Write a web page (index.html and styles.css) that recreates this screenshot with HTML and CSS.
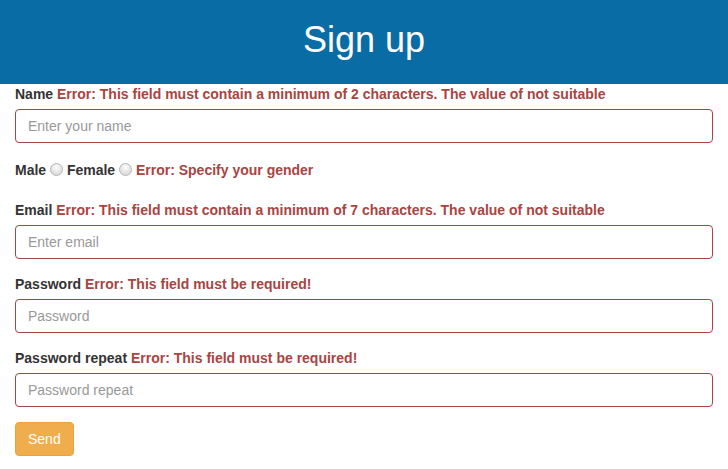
FILE: index.html
```html
<!DOCTYPE html>
<html lang="en">
<head>
<meta charset="utf-8">
<title>Sign up</title>
<link rel="stylesheet" href="styles.css">
</head>
<body>
<header class="header">
  <h1 class="title">Sign up</h1>
</header>
<form class="form">
  <div class="group">
    <label class="label">Name <span class="error">Error: This field must contain a minimum of 2 characters. The value of not suitable</span></label>
    <input class="control" type="text" placeholder="Enter your name">
  </div>
  <div class="group gender">
    <label class="label">Male</label> <input class="radio" type="radio" name="g"> <label class="label">Female</label> <input class="radio" type="radio" name="g"> <span class="error">Error: Specify your gender</span>
  </div>
  <div class="group">
    <label class="label">Email <span class="error">Error: This field must contain a minimum of 7 characters. The value of not suitable</span></label>
    <input class="control" type="text" placeholder="Enter email">
  </div>
  <div class="group">
    <label class="label">Password <span class="error">Error: This field must be required!</span></label>
    <input class="control" type="password" placeholder="Password">
  </div>
  <div class="group">
    <label class="label">Password repeat <span class="error">Error: This field must be required!</span></label>
    <input class="control" type="password" placeholder="Password repeat">
  </div>
  <button class="btn" type="button">Send</button>
</form>
</body>
</html>
```

FILE: styles.css
```css
* { box-sizing: border-box; }
html, body { margin: 0; padding: 0; }
body {
  font-family: "Liberation Sans", Arial, Helvetica, sans-serif;
  font-size: 14px;
  line-height: 20px;
  color: #333;
  background: #fff;
}
.header {
  background: #0a6ca4;
  height: 84px;
  padding-top: 20px;
  text-align: center;
}
.title {
  margin: 0;
  font-size: 36px;
  font-weight: 500;
  line-height: 39.6px;
  color: #fff;
}
.form {
  padding: 0 15px;
}
.group {
  margin-bottom: 15px;
}
.label {
  display: inline-block;
  font-weight: bold;
  margin-bottom: 5px;
  color: #333;
}
.error {
  color: #a94442;
  font-weight: bold;
}
.control {
  display: block;
  width: 100%;
  height: 34px;
  padding: 6px 12px;
  font-family: inherit;
  font-size: 14px;
  line-height: 20px;
  color: #555;
  background: #fff;
  border: 1px solid #a94442;
  border-radius: 4px;
  outline: none;
}
.control::placeholder { color: #999; opacity: 1; }
.gender {
  height: 27px;
  padding-top: 2px;
}
.gender .label { margin-bottom: 0; }
.radio {
  -webkit-appearance: none;
  appearance: none;
  width: 13px;
  height: 13px;
  margin: 0;
  border: 1px solid #b5b5b5;
  border-radius: 50%;
  background: radial-gradient(circle at 50% 30%, #fdfdfd 0%, #e4e4e4 55%, #cfcfcf 100%);
  vertical-align: -1px;
}
.btn {
  display: inline-block;
  padding: 6px 12px;
  font-family: inherit;
  font-size: 14px;
  line-height: 20px;
  color: #fff;
  background: #f0ad4e;
  border: 1px solid #eea236;
  border-radius: 4px;
  cursor: pointer;
}
```
